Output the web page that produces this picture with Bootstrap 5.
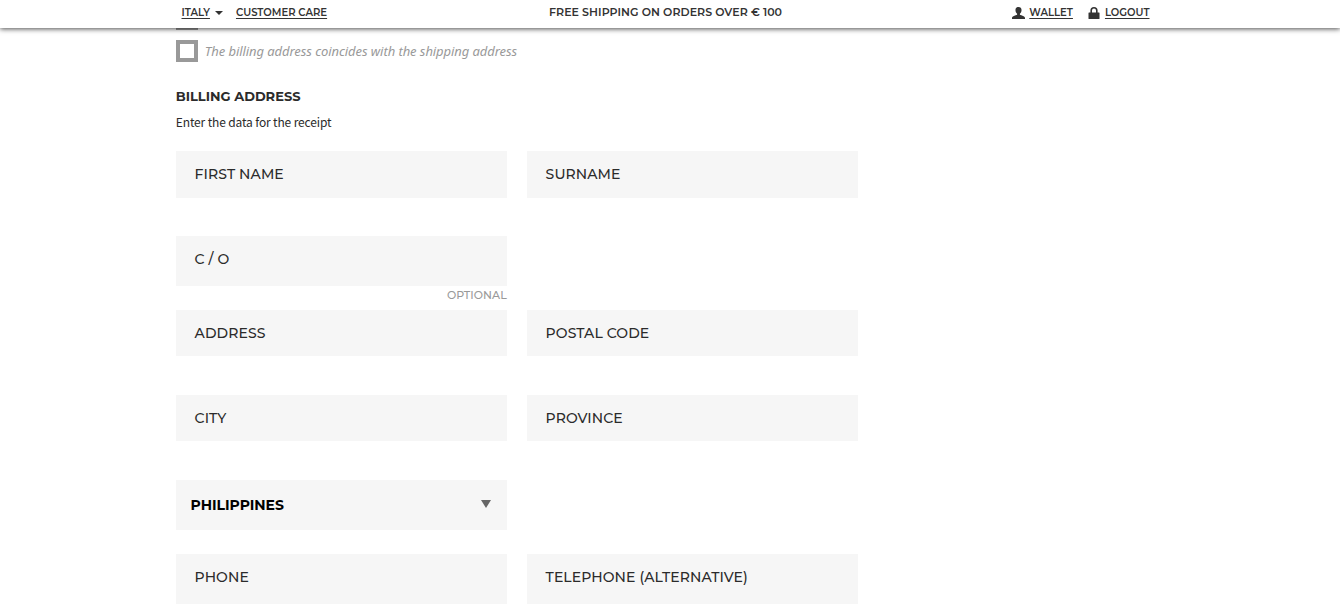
<!DOCTYPE html>
<html lang="en">
<head>
<meta charset="utf-8">
<meta name="viewport" content="width=device-width, initial-scale=1">
<title>Billing address</title>
<link href="https://cdn.jsdelivr.net/npm/bootstrap@5.3.0/dist/css/bootstrap.min.css" rel="stylesheet">
<style>
  body { font-family: Montserrat, Inter, sans-serif; color: #2b2b2b; height: 609px; overflow: hidden; }
  .topbar { height: 28px; box-shadow: 0 1px 5px 0 rgba(0,0,0,.7); font-size: 10.08px; font-weight: 600; line-height: 24px; z-index: 5; padding: 0 190.5px 3px 181.5px; }
  .topbar a { color: #333; text-decoration: underline; text-underline-offset: 2px; }
  .topbar svg { display: block; }
  .caret { width: 8px; height: 4px; margin: 0 13px 0 5px; }
  .promo { font-size: 11px; letter-spacing: .06px; color: #333; position: absolute; left: 549px; top: 0; white-space: nowrap; }
  .page-form { width: 682px; margin-left: 175.800px; }
  .tick { width: 22px; height: 22px; border: 4px solid #999; }
  .tick-prev { width: 22px; height: 2px; background: #999; }
  .tick-row { margin-top: 10px; }
  .same-label { font: italic 13px/22px "Noto Sans", sans-serif; letter-spacing: -.07px; color: #999; margin-left: 7px; }
  .form-title { font-size: 13px; font-weight: 700; line-height: 18px; margin: 25px 0 0; }
  .intro { font: 12px/18px "Noto Sans CJK SC", sans-serif; letter-spacing: -.14px; margin: 8px 0 20px; }
  .fields { display: grid; grid-template-columns: 331px 331px; column-gap: 20px; grid-template-rows: 85px 74px 85px 85px 74px 50px; }
  .field { background: #f6f6f6; height: 46px; padding: 0 18.8px; font-size: 14px; font-weight: 500; letter-spacing: .09px; line-height: 46px; }
  .field.tall { height: 50px; }
  .field.first { height: 47px; }
  .left { grid-column: 1; }
  .hint { font-size: 11px; font-weight: 500; letter-spacing: .05px; line-height: 18px; color: #999; text-align: right; }
  .field.country { padding: 0 16px 0 14.8px; font-weight: 700; letter-spacing: -.02px; color: #000; line-height: 50px; }
  .country svg { margin-bottom: 2px; }
  .lock { margin: 0 5px 0 15px; }
</style>
</head>
<body>
<header class="topbar bg-white position-relative d-flex align-items-center">
  <a href="#">ITALY</a>
  <svg class="caret" viewBox="0 0 8 4"><path d="M0 0h8L4 4z" fill="#333"/></svg>
  <a href="#">CUSTOMER CARE</a>
  <span class="promo">FREE SHIPPING ON ORDERS OVER € 100</span>
  <div class="ms-auto d-flex align-items-center">
    <svg width="13" height="12" viewBox="0 0 12 12" preserveAspectRatio="none" class="me-1"><path d="M6 0C4.200 0 3.200 1.200 3.200 3c0 1.600.6 3 1.500 3.700v1.100C3.500 8.600 0 9 0 11v1h12v-1C12 9 8.500 8.600 7.300 7.800V6.700C8.200 6 8.800 4.600 8.800 3 8.800 1.200 7.800 0 6 0z" fill="#333"/></svg>
    <a href="#">WALLET</a>
    <svg class="lock" width="12" height="12" viewBox="0 0 12 12"><path d="M3.200 6V3.600a2.800 2.800 0 0 1 5.600 0V6" fill="none" stroke="#333" stroke-width="1.600"/><rect x=".5" y="5.500" width="11" height="6.500" rx=".5" fill="#333"/></svg>
    <a href="#">LOGOUT</a>
  </div>
</header>
<main class="page-form">
  <div class="tick-prev"></div>
  <div class="tick-row d-flex"><span class="tick"></span><span class="same-label">The billing address coincides with the shipping address</span></div>
  <h1 class="form-title">BILLING ADDRESS</h1>
  <p class="intro">Enter the data for the receipt</p>
  <div class="fields">
    <div class="field first">FIRST NAME</div><div class="field first">SURNAME</div>
    <div class="left"><div class="field tall">C / O</div><div class="hint">OPTIONAL</div></div>
    <div class="field left">ADDRESS</div><div class="field">POSTAL CODE</div>
    <div class="field left">CITY</div><div class="field">PROVINCE</div>
    <div class="field tall country left d-flex align-items-center justify-content-between">PHILIPPINES <svg width="10" height="8" viewBox="0 0 10 8"><path d="M0 0h10L5 8z" fill="#666"/></svg></div>
    <div class="field tall left">PHONE</div><div class="field tall">TELEPHONE (ALTERNATIVE)</div>
  </div>
</main>
<script src="https://cdn.jsdelivr.net/npm/bootstrap@5.3.0/dist/js/bootstrap.bundle.min.js"></script>
</body>
</html>
